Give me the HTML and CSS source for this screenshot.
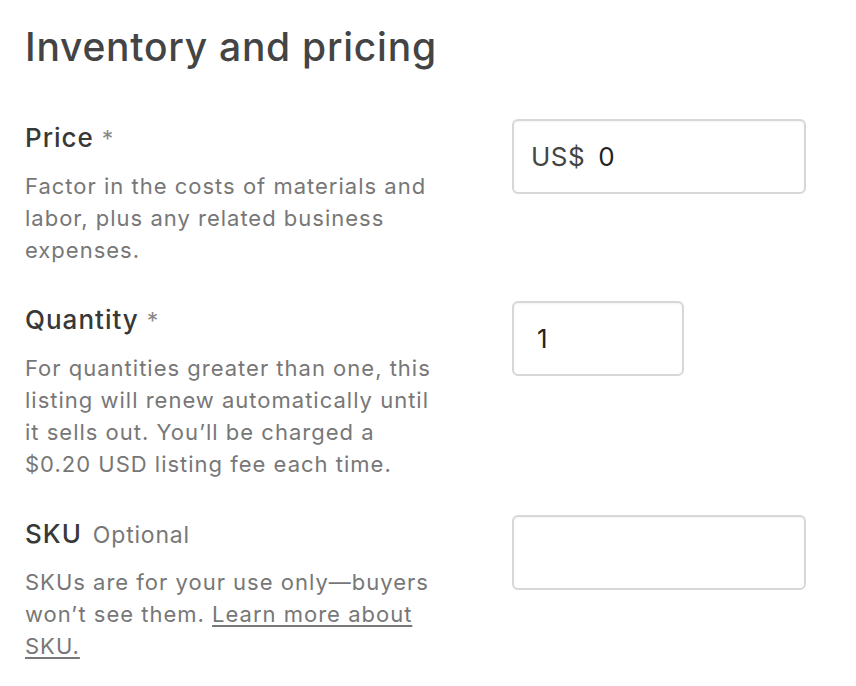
FILE: index.html
```html
<!DOCTYPE html>
<html lang="en">
<head>
<meta charset="utf-8">
<title>Inventory and pricing</title>
<link rel="stylesheet" href="styles.css">
</head>
<body>
<section class="panel">
  <h1 class="title">Inventory and pricing</h1>

  <div class="field field-price">
    <div class="info">
      <label class="label">Price <span class="req">*</span></label>
      <p class="desc">Factor in the costs of materials and labor, plus any related business expenses.</p>
    </div>
    <div class="control">
      <div class="input input-wide"><span class="prefix">US$</span><span class="value">0</span></div>
    </div>
  </div>

  <div class="field field-qty">
    <div class="info">
      <label class="label">Quantity <span class="req">*</span></label>
      <p class="desc">For quantities greater than one, this listing will renew automatically until it sells out. You’ll be charged a $0.20 USD listing fee each time.</p>
    </div>
    <div class="control">
      <div class="input input-narrow"><span class="value">1</span></div>
    </div>
  </div>

  <div class="field field-sku">
    <div class="info">
      <label class="label">SKU <span class="opt">Optional</span></label>
      <p class="desc">SKUs are for your use only—buyers won’t see them. <a class="link" href="#">Learn more about SKU.</a></p>
    </div>
    <div class="control">
      <div class="input input-wide"></div>
    </div>
  </div>
</section>
</body>
</html>
```

FILE: styles.css
```css
* { box-sizing: border-box; }
html, body { margin: 0; padding: 0; background: #fff; }
body {
  font-family: "Inter", "Liberation Sans", sans-serif;
  color: #222;
}
.panel {
  padding: 21px 0 0 25px;
  width: 856px;
}
.title {
  margin: 0 0 46px 0;
  font-size: 39px;
  line-height: 52px;
  font-weight: 500;
  color: #444;
  letter-spacing: 0.75px;
}
.field {
  display: grid;
  grid-template-columns: 420px 1fr;
  column-gap: 67px;
  margin-bottom: 35px;
}
.info { padding-top: 3px; }
.label {
  display: block;
  font-size: 26px;
  line-height: 32px;
  font-weight: 500;
  color: #383838;
  letter-spacing: 1px;
}
.req { font-weight: 400; color: #888; font-size: 23px; letter-spacing: 0; }
.opt { font-weight: 400; color: #777; font-size: 23px; margin-left: 3px; letter-spacing: 0.8px; }
.desc {
  margin: 15px 0 0 0;
  font-size: 22px;
  line-height: 32px;
  color: #777;
  letter-spacing: 1px;
}
.link { color: #777; text-decoration: underline; text-decoration-thickness: 2px; text-underline-offset: 3px; }
.input {
  height: 75px;
  border: 2px solid #d7d7d7;
  border-radius: 6px;
  box-shadow: inset 0 1px 2px rgba(0,0,0,0.05);
  background: #fff;
  display: flex;
  align-items: center;
  padding: 0 17px;
  font-size: 26px;
  color: #222;
  letter-spacing: 0.5px;
}
.input-wide { width: 294px; }
.input-narrow { width: 172px; }
.prefix { color: #444; margin-right: 13px; }
.value { color: #222; }
.input-narrow .value { margin-left: 6px; }
```
